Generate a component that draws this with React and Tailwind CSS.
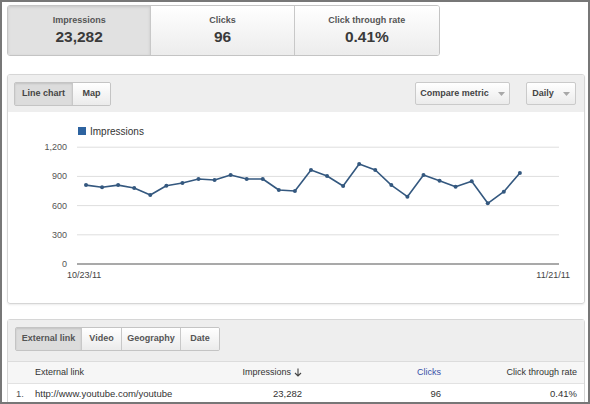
import React from "react";

const values = [811, 788, 811, 781, 709, 804, 832, 873, 863, 914, 873, 873, 760, 750, 966, 904, 801, 1027, 966, 811, 691, 914, 856, 794, 850, 624, 743, 935];

const stats = [
  { label: "Impressions", value: "23,282", active: true, w: "w-[143px]" },
  { label: "Clicks", value: "96", w: "w-[144px]" },
  { label: "Click through rate", value: "0.41%", w: "w-[146px]" },
];

function Caret() {
  return (
    <svg width="7" height="4" viewBox="0 0 7 4" className="ml-[9px]">
      <path d="M0 0 L7 0 L3.5 4 Z" fill="#a8a8a8" />
    </svg>
  );
}

function Chart() {
  const y0 = 152;
  const step = 29.2;
  const px = (i) => 78 + i * 16.07;
  const py = (v) => y0 - (v / 300) * step;
  const pts = values.map((v, i) => `${px(i).toFixed(1)},${py(v).toFixed(1)}`).join(" ");

  return (
    <svg width="577" height="190" viewBox="0 0 577 190" className="block">
      <rect x="70" y="15" width="8" height="8" fill="#2d63a0" />
      <text x="82" y="23" fontSize="10" fill="#333">Impressions</text>

      {[1200, 900, 600, 300].map((v) => (
        <g key={v}>
          <line x1="69" x2="551" y1={py(v)} y2={py(v)} stroke="#dedede" strokeWidth="1" />
          <text x="59" y={py(v) + 3} fontSize="9" fill="#555" textAnchor="end">
            {v.toLocaleString("en-US")}
          </text>
        </g>
      ))}
      <line x1="69" x2="551" y1={y0} y2={y0} stroke="#a9a9a9" strokeWidth="2" />
      <text x="59" y={y0 + 3} fontSize="9" fill="#555" textAnchor="end">0</text>

      <polyline points={pts} fill="none" stroke="#34587f" strokeWidth="1.6" strokeLinejoin="round" />
      {values.map((v, i) => (
        <circle key={i} cx={px(i)} cy={py(v)} r="2" fill="#34587f" />
      ))}

      <text x="59" y="166" fontSize="9" fill="#444">10/23/11</text>
      <text x="562" y="166" fontSize="9" fill="#444" textAnchor="end">11/21/11</text>
    </svg>
  );
}

export default function App() {
  return (
    <div className="w-[590px] h-[404px] overflow-hidden border-2 border-[#777] bg-white pl-[5px] pr-[3px] pt-[3px] font-['Liberation_Sans',Arial,sans-serif] text-[#333]">

      {/* STATS TILES */}
      <div className="flex w-[433px] h-[51px] rounded-[3px] border border-[#c4c4c4] overflow-hidden">
        {stats.map((s, i) => (
          <div
            key={s.label}
            className={`${s.w} flex flex-col items-center pt-[9px] ${i > 0 ? "border-l border-[#c8c8c8]" : ""} ${s.active ? "bg-[#e1e1e1] shadow-[inset_0_1px_3px_rgba(0,0,0,0.12)]" : "bg-gradient-to-b from-[#ffffff] to-[#ececec]"}`}
          >
            <span className="text-[9px] leading-[11px] font-bold text-[#555]">{s.label}</span>
            <span className="mt-[2px] text-[15.5px] leading-[18px] font-bold text-[#3a3a3a]">{s.value}</span>
          </div>
        ))}
      </div>

      {/* CHART PANEL */}
      <div className="mt-[18px] h-[230px] rounded-[3px] border border-[#d6d6d6] shadow-[0_1px_2px_rgba(0,0,0,0.08)] overflow-hidden">
        <div className="h-[37px] bg-[#eeeeee] flex items-center justify-between pl-[6px] pr-[8px]">
          <div className="flex h-[24px] rounded-[2px] border border-[#c4c4c4] overflow-hidden text-[9px] font-bold text-[#444]">
            <div className="w-[57px] flex items-center justify-center bg-[#dcdcdc] shadow-[inset_0_1px_2px_rgba(0,0,0,0.12)]">Line chart</div>
            <div className="w-[38px] flex items-center justify-center border-l border-[#c8c8c8] bg-gradient-to-b from-[#ffffff] to-[#ebebeb]">Map</div>
          </div>
          <div className="flex gap-[16px] text-[9px] font-bold text-[#444]">
            <div className="w-[95px] h-[23px] flex items-center justify-center rounded-[2px] border border-[#cacaca] bg-gradient-to-b from-[#ffffff] to-[#ebebeb]">
              Compare metric<Caret />
            </div>
            <div className="w-[50px] h-[23px] flex items-center justify-center rounded-[2px] border border-[#cacaca] bg-gradient-to-b from-[#ffffff] to-[#ebebeb]">
              Daily<Caret />
            </div>
          </div>
        </div>
        <div className="bg-white">
          <Chart />
        </div>
      </div>

      {/* TABLE PANEL */}
      <div className="mt-[15px] rounded-t-[3px] border border-[#d6d6d6]">
        <div className="h-[41px] bg-[#eeeeee] flex items-start pt-[7px] pl-[7px]">
          <div className="flex h-[24px] rounded-[2px] border border-[#c4c4c4] overflow-hidden text-[9px] font-bold text-[#555]">
            <div className="w-[65px] flex items-center justify-center bg-[#dcdcdc] shadow-[inset_0_1px_2px_rgba(0,0,0,0.12)]">External link</div>
            <div className="w-[40px] flex items-center justify-center border-l border-[#c8c8c8] bg-gradient-to-b from-[#ffffff] to-[#ebebeb]">Video</div>
            <div className="w-[59px] flex items-center justify-center border-l border-[#c8c8c8] bg-gradient-to-b from-[#ffffff] to-[#ebebeb]">Geography</div>
            <div className="w-[39px] flex items-center justify-center border-l border-[#c8c8c8] bg-gradient-to-b from-[#ffffff] to-[#ebebeb]">Date</div>
          </div>
        </div>

        <div className="grid grid-cols-[19px_1fr_100px_139px_136px] items-center h-[22px] pl-[8px] pr-[7px] border-t border-[#dcdcdc] bg-[#f6f6f6] text-[9px] text-[#333]">
          <span></span>
          <span>External link</span>
          <span className="flex items-center justify-end gap-[3px]">
            Impressions
            <svg width="8" height="9" viewBox="0 0 8 9">
              <path d="M4 0.5 V8 M1 5 L4 8 L7 5" fill="none" stroke="#444" strokeWidth="1.1" />
            </svg>
          </span>
          <span className="text-right text-[#3850a8]">Clicks</span>
          <span className="text-right">Click through rate</span>
        </div>

        <div className="grid grid-cols-[19px_1fr_100px_139px_136px] items-center h-[21px] pl-[8px] pr-[7px] border-t border-[#e2e2e2] bg-white text-[9.5px] text-[#333]">
          <span className="text-[#555]">1.</span>
          <span>http://www.youtube.com/youtube</span>
          <span className="text-right">23,282</span>
          <span className="text-right">96</span>
          <span className="text-right">0.41%</span>
        </div>
      </div>
    </div>
  );
}
